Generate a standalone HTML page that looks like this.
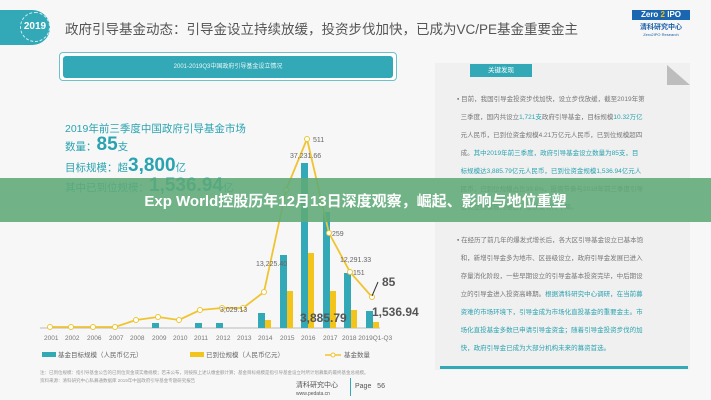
<!DOCTYPE html>
<html><head><meta charset="utf-8"><style>
body{margin:0;width:711px;height:400px;overflow:hidden;background:#f7f7f7;font-family:"Liberation Sans","Noto Sans CJK SC",sans-serif;position:relative}
.a{position:absolute;white-space:nowrap}
.p{color:#777;font-size:6.5px;left:457px;line-height:18px}
.t{color:#2aa3b0}
</style></head><body>
<div class="a" style="left:0;top:10px;width:50px;height:35px;background:#33a8b6;border-radius:0 18px 18px 0"></div>
<div class="a" style="left:20px;top:12px;width:28px;height:28px;border:1px dashed #cfeff2;border-radius:50%;color:#fff;font-size:10px;font-weight:bold;line-height:28px;text-align:center">2019</div>
<div class="a" style="left:65px;top:18px;font-size:13.5px;color:#555">政府引导基金动态：引导金设立持续放缓，投资步伐加快，已成为VC/PE基金重要金主</div>
<div class="a" style="left:632px;top:10px;width:58px;text-align:center">
<div style="background:#1a66b0;color:#fff;font-size:8px;font-weight:bold;height:10px;line-height:10px">Zero <span style="color:#f5c000">2</span> IPO</div>
<div style="color:#1a5fa8;font-size:7px;font-weight:bold;margin-top:2px">清科研究中心</div>
<div style="color:#1a5fa8;font-size:4px">Zero2IPO Research</div></div>
<div class="a" style="left:59px;top:52px;width:336px;height:27px;border:1px solid #6cc1cb;border-radius:4px;background:#fff"></div>
<div class="a" style="left:63px;top:56px;width:330px;height:22px;background:#33a8b6;border-radius:3px;color:#e8f7f8;font-size:6px;line-height:22px;text-align:center">2001-2019Q3中国政府引导基金设立情况</div>
<div class="a" style="left:435px;top:63px;width:255px;height:307px;background:#f0f0f0"></div>
<div class="a" style="left:470px;top:64px;width:62px;height:13px;background:#33a8b6;color:#fff;font-size:6.5px;line-height:13px;text-align:center">关键发现</div>
<svg class="a" style="left:667px;top:65px" width="23" height="20"><polygon points="0,0 23,20 0,20" fill="#bdbdbd"/></svg>
<div class="a p" style="top:91px">▪ 目前，我国引导金投资步伐加快，设立步伐放缓，截至2019年第<br>&nbsp;&nbsp;三季度，国内共设立<span class="t">1,721支</span>政府引导基金，目标规模<span class="t">10.32万亿</span><br>&nbsp;&nbsp;元人民币，已到位资金规模4.21万亿元人民币，已到位规模超四<br>&nbsp;&nbsp;成。<span class="t">其中2019年前三季度，政府引导基金设立数量为85支，目<br>&nbsp;&nbsp;标规模达3,885.79亿元人民币，已到位资金规模1,536.94亿元人</span><br>&nbsp;&nbsp;民币，已到位规模占比39.6%，投资节奏与2018年前三季度引导<br>&nbsp;&nbsp;金设立数量较为接近，但数量有所下降。</div>
<div class="a p" style="top:232px">▪ 在经历了前几年的爆发式增长后，各大区引导基金设立已基本饱<br>&nbsp;&nbsp;和，新增引导金多为地市、区县级设立，政府引导金发展已进入<br>&nbsp;&nbsp;存量消化阶段，一些早期设立的引导金基本投资完毕，中后期设<br>&nbsp;&nbsp;立的引导金进入投资高峰期。<span class="t">根据清科研究中心调研，在当前募<br>&nbsp;&nbsp;资难的市场环境下，引导金成为市场化直投基金的重要金主。市<br>&nbsp;&nbsp;场化直投基金多数已申请引导金资金；随着引导金投资步伐的加<br>&nbsp;&nbsp;快，政府引导金已成为大部分机构未来的募资首选。</span></div>
<div class="a" style="left:440px;top:366px;width:248px;height:3px;background:#33a8b6"></div>
<div class="a" style="left:65px;top:121px;font-size:10.5px;color:#2aa3b0">2019年前三季度中国政府引导基金市场</div>
<div class="a" style="left:65px;top:134px;font-size:10.5px;color:#2aa3b0">数量：<b style="font-size:19px">85</b>支</div>
<div class="a" style="left:65px;top:155px;font-size:10.5px;color:#2aa3b0">目标规模：超<b style="font-size:19px">3,800</b>亿</div>
<div class="a" style="left:65px;top:175px;font-size:10.5px;color:#2aa3b0">其中已到位规模：<b style="font-size:19px">1,536.94</b>亿</div>
<svg class="a" style="left:0;top:0" width="430" height="400" font-family="Liberation Sans" font-size="7" fill="#666">
<line x1="40" y1="328" x2="380" y2="328" stroke="#bbb"/>
<g fill="#33a8b6"><rect x="152" y="323" width="7" height="5"/><rect x="195" y="323" width="7" height="5"/><rect x="216" y="323" width="7" height="5"/><rect x="258" y="313" width="7" height="15"/><rect x="280" y="255" width="7" height="73"/><rect x="301" y="163" width="7" height="165"/><rect x="323" y="212" width="7" height="116"/><rect x="344" y="273" width="7" height="55"/><rect x="366" y="311" width="7" height="17"/></g>
<g fill="#f2c41c"><rect x="265" y="320" width="6" height="8"/><rect x="287" y="291" width="6" height="37"/><rect x="308" y="253" width="6" height="75"/><rect x="330" y="291" width="6" height="37"/><rect x="351" y="310" width="6" height="18"/><rect x="373" y="322" width="6" height="6"/></g>
<polyline fill="none" stroke="#f0c430" stroke-width="1.8" points="50,327 71,327 93,327 115,327 136,320 158,317 179,320 200,310 222,308 243,308 264,292 286,190 307,139 329,233 350,272 372,297"/>
<g fill="#fff" stroke="#f0c430" stroke-width="1"><circle cx="50" cy="327" r="2.5"/><circle cx="71" cy="327" r="2.5"/><circle cx="93" cy="327" r="2.5"/><circle cx="115" cy="327" r="2.5"/><circle cx="136" cy="320" r="2.5"/><circle cx="158" cy="317" r="2.5"/><circle cx="179" cy="320" r="2.5"/><circle cx="200" cy="310" r="2.5"/><circle cx="222" cy="308" r="2.5"/><circle cx="243" cy="308" r="2.5"/><circle cx="264" cy="292" r="2.5"/><circle cx="286" cy="190" r="2.5"/><circle cx="307" cy="139" r="2.5"/><circle cx="329" cy="233" r="2.5"/><circle cx="350" cy="272" r="2.5"/><circle cx="372" cy="297" r="2.5"/></g>
<text x="313" y="142">511</text><text x="290" y="158">37,231.66</text><text x="332" y="236">259</text><text x="353" y="275">151</text><text x="256" y="266">13,225.40</text><text x="340" y="262">12,291.33</text><text x="220" y="312">3,029.13</text>
<line x1="372" y1="296" x2="378" y2="282" stroke="#333"/>
<text x="382" y="286" font-size="12" font-weight="bold" fill="#555">85</text>
<text x="372" y="316" font-size="12" font-weight="bold" fill="#555">1,536.94</text>
<text x="300" y="322" font-size="12" font-weight="bold" fill="#555">3,885.79</text>
<g font-size="6.5" fill="#777"><text x="44" y="340">2001</text><text x="65" y="340">2002</text><text x="87" y="340">2006</text><text x="109" y="340">2007</text><text x="130" y="340">2008</text><text x="152" y="340">2009</text><text x="173" y="340">2010</text><text x="194" y="340">2011</text><text x="216" y="340">2012</text><text x="237" y="340">2013</text><text x="258" y="340">2014</text><text x="280" y="340">2015</text><text x="301" y="340">2016</text><text x="323" y="340">2017</text><text x="342" y="340">2018 2019Q1-Q3</text></g>
<rect x="42" y="352" width="14" height="5" fill="#33a8b6"/><text x="58" y="357" font-size="6.5">基金目标规模（人民币亿元）</text>
<rect x="190" y="352" width="14" height="5" fill="#f2c41c"/><text x="206" y="357" font-size="6.5">已到位规模（人民币亿元）</text>
<line x1="325" y1="355" x2="341" y2="355" stroke="#f0c430" stroke-width="1.5"/><circle cx="333" cy="355" r="2" fill="#fff" stroke="#f0c430"/><text x="344" y="357" font-size="6.5">基金数量</text>
<text x="40" y="374" font-size="4.5" fill="#999">注：已到位规模：指引导基金公告的已到位资金或实缴规模；若未公布，则按照上述认缴金额计算；基金目标规模是指引导基金设立时所计划募集的最终基金总规模。</text>
<text x="40" y="382" font-size="4.5" fill="#999">资料来源：清科研究中心私募通数据库 2019年中国政府引导基金专题研究报告</text>
</svg>
<div class="a" style="left:296px;top:380px;font-size:7px;color:#555">清科研究中心<br><span style="font-size:5px">www.pedata.cn</span></div>
<div class="a" style="left:350px;top:378px;width:1px;height:18px;background:#33a8b6"></div>
<div class="a" style="left:355px;top:383px;font-size:7px;color:#555">Page &nbsp; 56</div>
<div class="a" style="left:0;top:178px;width:711px;height:44px;background:rgba(95,170,120,0.88)"></div>
<div class="a" style="left:0;top:190px;width:711px;text-align:center;color:#fff;font-size:15px;font-weight:bold">Exp World控股历年12月13日深度观察，崛起、影响与地位重塑</div>
</body></html>
